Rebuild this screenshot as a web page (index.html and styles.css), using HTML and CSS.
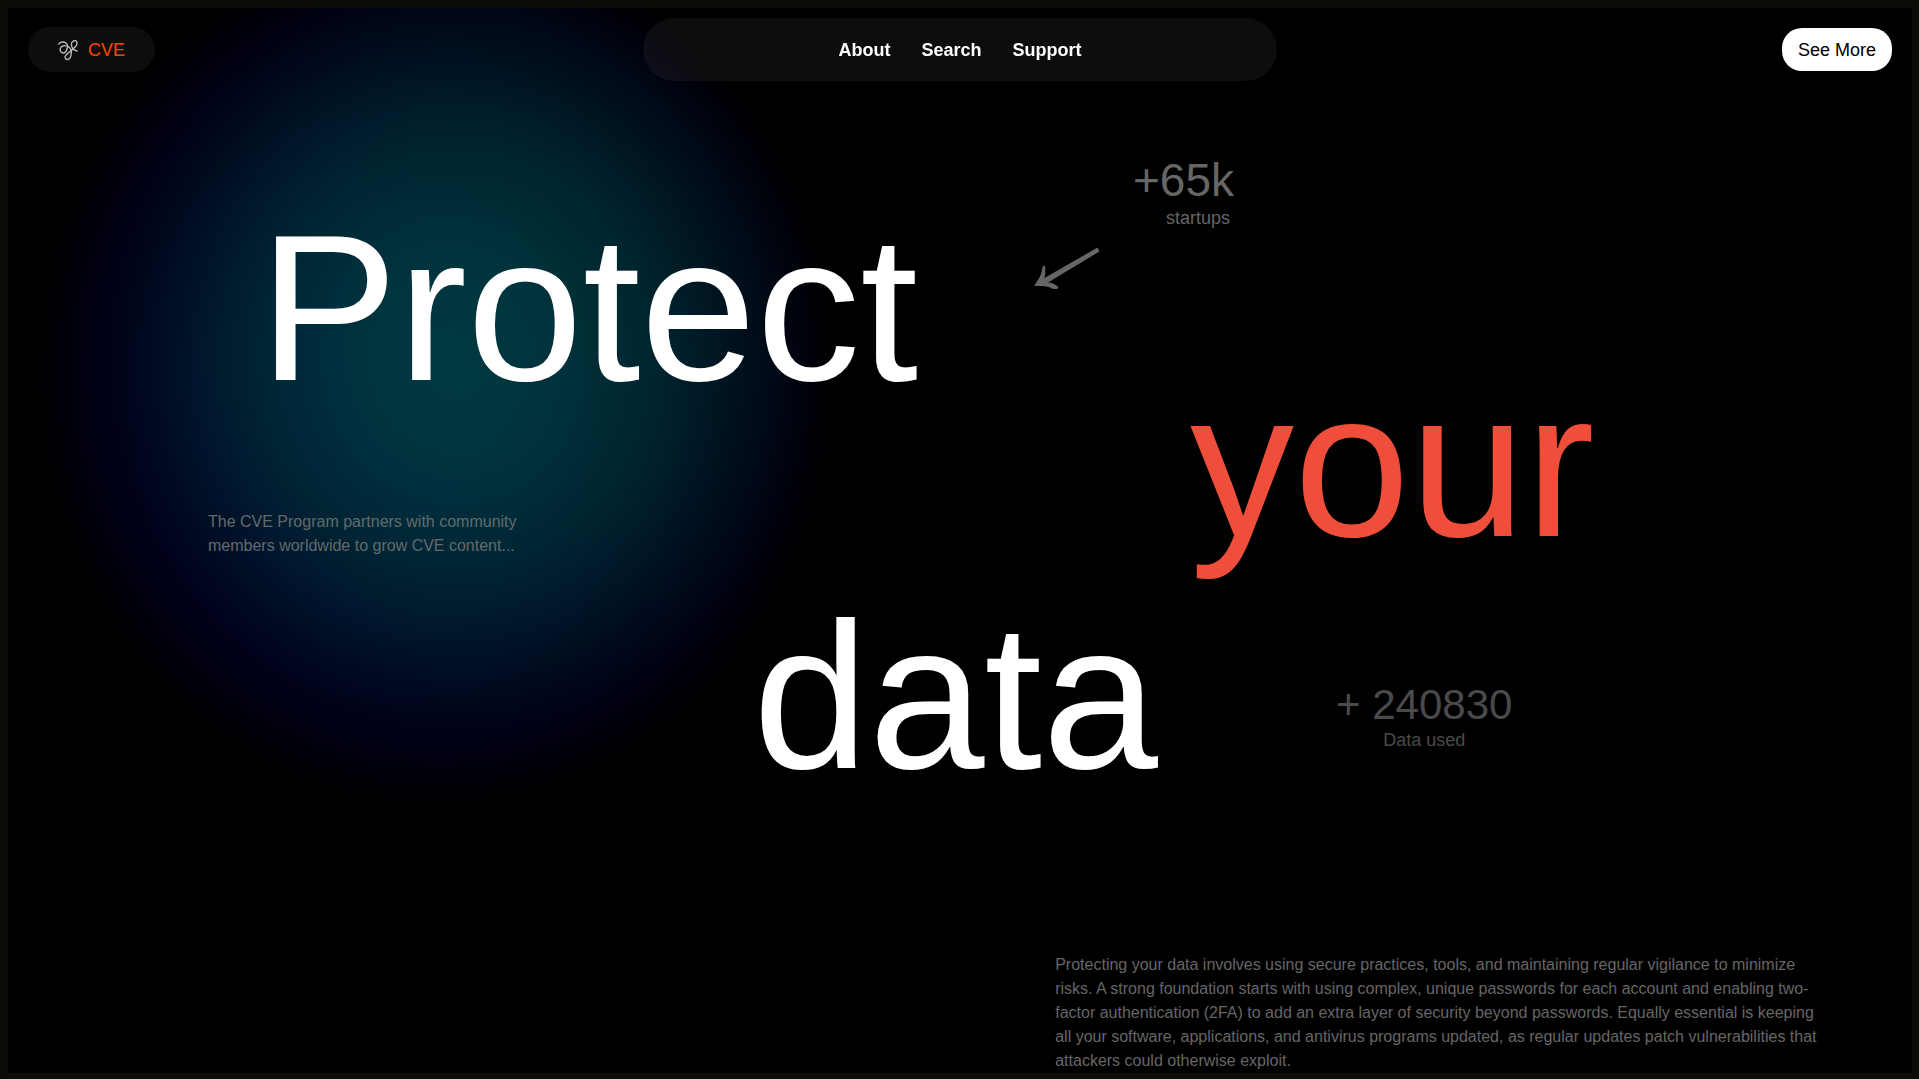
FILE: index.html
```html
<!DOCTYPE html>
<html lang="en">
<head>
<meta charset="utf-8">
<title>CVE</title>
<link rel="stylesheet" href="styles.css">
</head>
<body>
<div class="page">
  <div class="glow"></div>
  <header class="header">
    <a class="brand" href="#">
      <svg class="brand-icon" viewBox="0 0 20 20" aria-hidden="true"><path d="M.5 4.500C1.500 2 5 1.200 8 3C11 4.800 9 12.500 5.500 13C2.500 13.200 1.500 10 2.500 8C3.800 5.200 8 4.800 11 7C14 9.500 13.500 14 12.500 17C11.500 20 7.500 20.500 7 17.500C6.800 14.500 12 12 15 9C18 6.500 20 3.500 18.500 1.300C17-.3 14 1 13.500 3.500C13 7 15 10.500 19.500 11"/></svg>
      <span>CVE</span>
    </a>
    <nav class="nav">
      <a href="#about">About</a>
      <a href="#search">Search</a>
      <a href="#support">Support</a>
    </nav>
    <button class="more" type="button">See More</button>
  </header>
  <main>
    <section class="hero">
      <h1 class="title">
        <span class="word word-protect">Protect</span>
        <span class="word word-your">your</span>
        <span class="word word-data">data</span>
      </h1>
      <p class="intro">The CVE Program partners with community members worldwide to grow CVE content...</p>
      <div class="stat stat-startups">
        <p class="stat-value">+65k</p>
        <p class="stat-label">startups</p>
        <svg class="arrow" viewBox="0 0 66 44" aria-hidden="true"><path d="M63.500 .5L65.500 4.500L14 35.500C18.500 35.500 22 37.500 24.500 40.500C23.500 42.500 20 42.500 16 40.500C12 38.800 7 39 .5 39C2 35 7 30 8 23C8.500 19 10 18 11 18.500C11.500 23 11.500 27 10.500 31Z"/></svg>
      </div>
      <div class="stat stat-data">
        <p class="stat-value">+ 240830</p>
        <p class="stat-label">Data used</p>
      </div>
    </section>
    <section class="about" id="about">
      <p>Protecting your data involves using secure practices, tools, and maintaining regular vigilance to minimize risks. A strong foundation starts with using complex, unique passwords for each account and enabling two-factor authentication (2FA) to add an extra layer of security beyond passwords. Equally essential is keeping all your software, applications, and antivirus programs updated, as regular updates patch vulnerabilities that attackers could otherwise exploit.</p>
    </section>
  </main>
</div>
</body>
</html>
```
FILE: styles.css
```css
* { box-sizing: border-box; margin: 0; padding: 0; }

body {
  padding: 8px 7px 7px 8px;
  min-height: 100vh;
  display: flex;
  background: #0c0d06;
  color: #fff;
  font: 18px/20px "Liberation Sans", Arial, sans-serif;
}

a { color: inherit; text-decoration: none; }

.page {
  position: relative;
  flex: 1;
  overflow: hidden;
  border-radius: 4px;
  background: #000;
}

.glow {
  position: absolute;
  inset: 0;
  background:
    radial-gradient(355px 380px at 450px 350px, #003900 0%, #003400 25%, #002500 55%, #000e00 82%, #000 100%),
    radial-gradient(400px 435px at 428px 365px, #000042 0%, #00003c 30%, #00002b 60%, #000016 84%, #000 100%);
  background-blend-mode: screen;
}

.header {
  position: relative;
  display: grid;
  grid-template-columns: 1fr 1fr 1fr;
  align-items: center;
  padding-top: 10px;
}

.brand {
  justify-self: start;
  display: flex;
  align-items: center;
  gap: 10px;
  margin-left: 20px;
  padding: 12px 30px;
  height: 45px;
  border-radius: 23px;
  background: rgba(255, 255, 255, .05);
  color: #ff4500;
}

.brand-icon { width: 20px; height: 20px; overflow: visible; fill: none; stroke: #c4c4c4; stroke-width: 1.3; }

.nav {
  display: flex;
  justify-content: center;
  align-items: center;
  gap: 31px;
  height: 63px;
  border-radius: 32px;
  background: rgba(255, 255, 255, .05);
  backdrop-filter: blur(20px);
  font-weight: 700;
}

.more {
  justify-self: end;
  margin-right: 20px;
  padding: 0 16px;
  height: 43px;
  border: 0;
  border-radius: 20px;
  background: #fff;
  color: #000;
  font: inherit;
}

.hero {
  position: relative;
  display: grid;
  grid-template-columns: 1fr;
}

.title {
  display: flex;
  flex-direction: column;
  padding-top: 130px;
  padding-left: 4px;
  font-size: 208px;
  font-weight: 400;
  line-height: 194px;
}

.word-protect { margin-left: 13%; }
.word-your { margin-left: 62%; margin-top: -38px; color: #ef4f3a; }
.word-data { margin-left: 39%; margin-top: 38px; }

.intro {
  position: absolute;
  left: 200px;
  top: 429px;
  width: 320px;
  color: #646a6c;
  font-size: 16px;
  line-height: 24px;
}

.stat { position: absolute; color: #666; }
.stat-value { margin-bottom: 4px; }
.stat-startups { left: 1125px; top: 75px; text-align: right; }
.stat-startups .stat-value { font-size: 46px; line-height: 48px; }
.stat-startups .stat-label { padding-right: 4px; }
.stat-data { left: 1328px; top: 603px; color: #4a4a4a; text-align: center; }
.stat-data .stat-value { font-size: 42px; line-height: 42px; }

.arrow {
  position: absolute;
  right: 134px;
  top: 91px;
  width: 66px;
  height: 44px;
  fill: #666;
}

.about {
  position: relative;
  width: 45%;
  margin-left: 55%;
  padding-right: 84px;
  padding-top: 160px;
  color: #666;
  font-size: 16px;
  line-height: 24px;
}
```
